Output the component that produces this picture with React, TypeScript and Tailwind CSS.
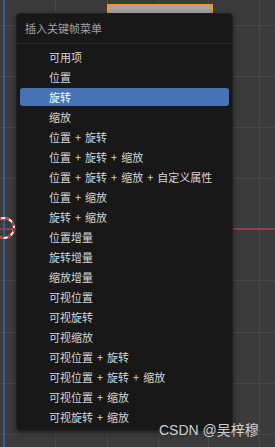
import React from "react";

const items = [
  "可用项",
  "位置",
  "旋转",
  "缩放",
  "位置 + 旋转",
  "位置 + 旋转 + 缩放",
  "位置 + 旋转 + 缩放 + 自定义属性",
  "位置 + 缩放",
  "旋转 + 缩放",
  "位置增量",
  "旋转增量",
  "缩放增量",
  "可视位置",
  "可视旋转",
  "可视缩放",
  "可视位置 + 旋转",
  "可视位置 + 旋转 + 缩放",
  "可视位置 + 缩放",
  "可视旋转 + 缩放",
];

function Grid() {
  const xs = [55, 107, 158, 208, 259];
  const ys = [25, 76, 127, 178, 280, 332, 383, 434];
  return (
    <svg className="absolute inset-0" width={275} height={447} viewBox="0 0 275 447">
      {xs.map((x) => (
        <rect key={"x" + x} x={x} y={0} width={1} height={447} fill="#484848" />
      ))}
      {ys.map((y) => (
        <rect key={"y" + y} x={0} y={y} width={275} height={1} fill="#484848" />
      ))}
      <rect x={0} y={228} width={275} height={2} fill="#9c3a4c" />
      <rect x={3} y={0} width={2} height={447} fill="#3a5a90" />
      <rect x={108} y={5} width={104} height={40} fill="#a6a6a6" stroke="#f39527" strokeWidth={2} />
      <circle cx={4} cy={228} r={10} fill="none" stroke="#ffffff" strokeWidth={2} />
      <circle
        cx={4}
        cy={228}
        r={10}
        fill="none"
        stroke="#e02020"
        strokeWidth={2}
        strokeDasharray="4 4"
      />
    </svg>
  );
}

function Label({ text }: { text: string }) {
  const parts = text.split(" + ");
  return (
    <>
      {parts.map((p, i) => (
        <React.Fragment key={i}>
          {i > 0 && <span className="px-[4px]">+</span>}
          <span>{p}</span>
        </React.Fragment>
      ))}
    </>
  );
}

export default function App() {
  return (
    <div
      className="relative w-[275px] h-[447px] overflow-hidden bg-[#3b3b3b]"
      style={{ fontFamily: '"Noto Sans CJK SC", "Noto Sans", sans-serif' }}
    >
      <Grid />
      <div className="absolute left-[16px] top-[13px] w-[217px] h-[418px] bg-[#181818] rounded-[4px] border border-[#202020] shadow-[0_2px_6px_rgba(0,0,0,0.45)] flex flex-col">
        <div className="h-[29px] flex items-center pl-[8px] text-[11px] text-[#a3a3a3] leading-none">
          插入关键帧菜单
        </div>
        <div className="h-px bg-[#2f2f2f]" />
        <div className="flex flex-col pt-[3px] px-[3px]">
          {items.map((t) => {
            const active = t === "旋转";
            return (
              <div key={t} className="h-[20px] py-px">
                <div
                  className={
                    "h-[18px] flex items-center pl-[29px] rounded-[3px] text-[11px] leading-none whitespace-pre " +
                    (active ? "bg-[#4772b3] text-white" : "text-[#d6d6d6]")
                  }
                >
                  <Label text={t} />
                </div>
              </div>
            );
          })}
        </div>
      </div>
      <div
        className="absolute left-[159px] top-[420px] text-[14px] leading-[20px] text-[#d0d0d0] whitespace-nowrap"
        style={{ fontFamily: '"Liberation Sans", "Noto Sans CJK SC", sans-serif' }}
      >
        CSDN @吴梓穆
      </div>
    </div>
  );
}
